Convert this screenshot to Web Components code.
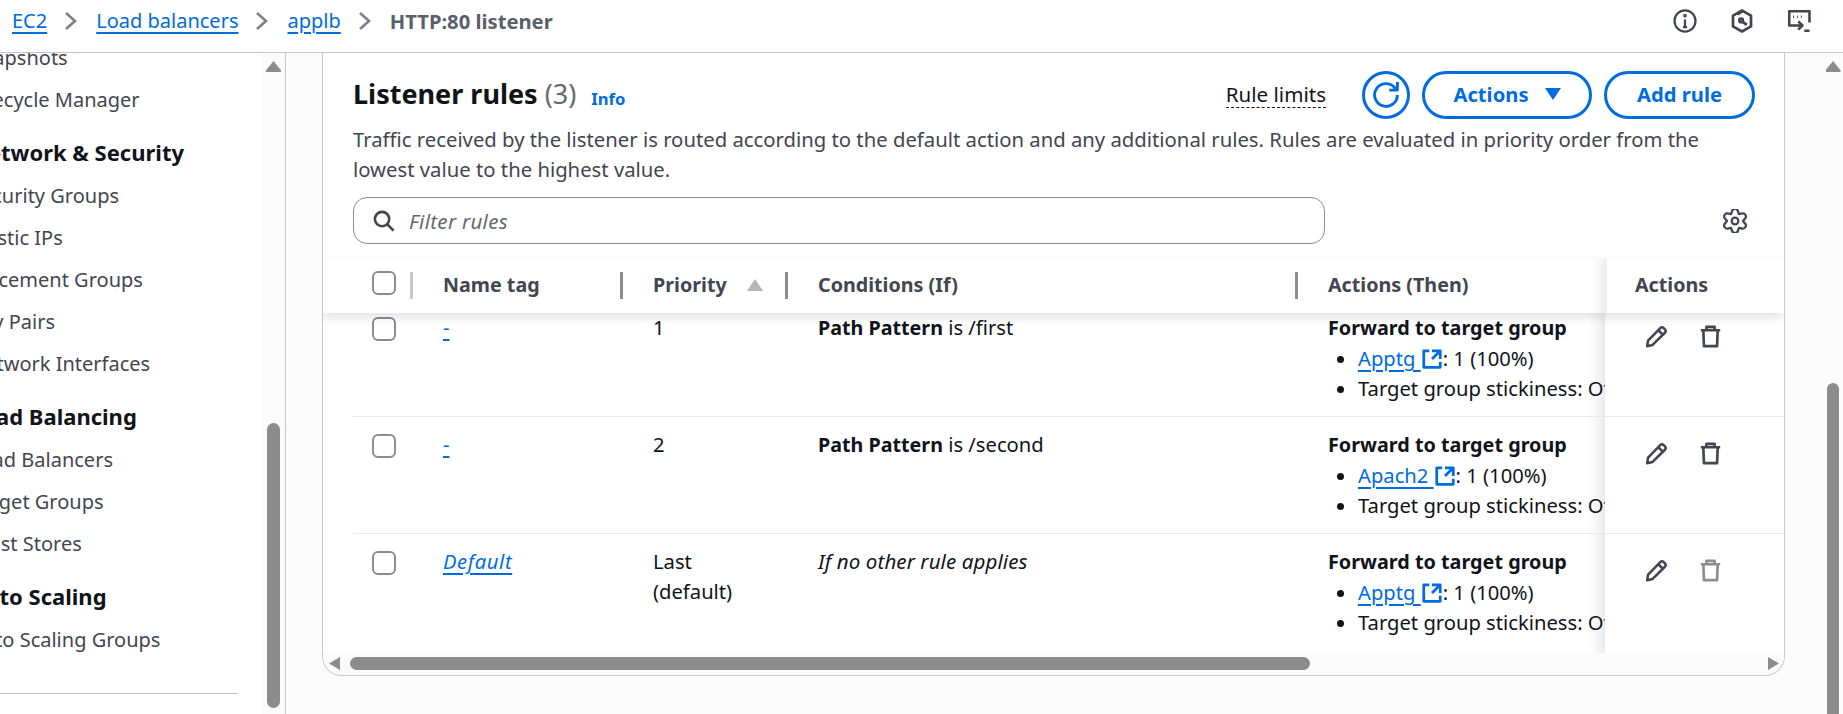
<!DOCTYPE html>
<html><head><meta charset="utf-8"><title>Listener rules</title>
<style>
html,body{margin:0;padding:0;height:714px;overflow:hidden;background:#fcfcfc}
body{font:20px/30px "Noto Sans",sans-serif;color:#0f141a}
</style></head><body>
<aws-shell>
  <aws-topbar slot="top">
    <aws-crumb href>EC2</aws-crumb><aws-crumb href>Load balancers</aws-crumb><aws-crumb href>applb</aws-crumb><aws-crumb>HTTP:80 listener</aws-crumb>
  </aws-topbar>
  <aws-sidenav slot="side">
    <nav-item>Snapshots</nav-item><nav-item>Lifecycle Manager</nav-item>
    <nav-item head>Network &amp; Security</nav-item><nav-item>Security Groups</nav-item><nav-item>Elastic IPs</nav-item><nav-item>Placement Groups</nav-item><nav-item>Key Pairs</nav-item><nav-item>Network Interfaces</nav-item>
    <nav-item head>Load Balancing</nav-item><nav-item>Load Balancers</nav-item><nav-item>Target Groups</nav-item><nav-item>Trust Stores</nav-item>
    <nav-item head>Auto Scaling</nav-item><nav-item>Auto Scaling Groups</nav-item>
  </aws-sidenav>
  <rules-card slot="main">
    <rule-row target="Apptg"><aws-link slot="name">-</aws-link><span slot="priority">1</span><span slot="cond"><b style="font-size:19.7px">Path Pattern</b> is /first</span></rule-row>
    <rule-row target="Apach2"><aws-link slot="name">-</aws-link><span slot="priority">2</span><span slot="cond"><b style="font-size:19.7px">Path Pattern</b> is /second</span></rule-row>
    <rule-row target="Apptg" disabled last><aws-link slot="name"><i style="letter-spacing:.6px">Default</i></aws-link><span slot="priority">Last<br>(default)</span><span slot="cond"><i style="font-size:20.5px;letter-spacing:.1px">If no other rule applies</i></span></rule-row>
  </rules-card>
</aws-shell>
<script>
const F='"Noto Sans",sans-serif';
function gear(){
  let d='';const c=8,ro=7.1,ri=5.3;
  for(let k=0;k<6;k++){
    const a=(k*60-90)*Math.PI/180,w=15*Math.PI/180,v=30*Math.PI/180;
    const p=(r,t)=>(c+r*Math.cos(t)).toFixed(2)+' '+(c+r*Math.sin(t)).toFixed(2);
    d+=(k?'L':'M')+p(ri,a-v)+'L'+p(ro,a-w)+'A2 2 0 0 1 '+p(ro,a+w)+'L'+p(ri,a+v);
  }
  return '<path d="'+d+'Z"/><circle cx="8" cy="8" r="2.2"/>';
}
const ICONS={
  refresh:'<path d="M10 5h5V0"/><path d="M15 8a7 7 0 1 1-1.1-3.77"/>',
  external:'<path d="M14 8V2H8M14 2 8 8M6 2H2v12h12v-4"/>',
  search:'<circle cx="7" cy="7" r="5"/><path d="m10.6 10.6 4.4 4.4"/>',
  settings:gear(),
  edit:'<path d="M2 14.2 2.6 10.6 10.4 2.6a1.6 1.6 0 0 1 2.2 0l.8.8a1.6 1.6 0 0 1 0 2.2L5.5 13.4Z"/><path d="m9.2 4 2.8 2.8"/>',
  trash:'<path d="M1.8 4h12.4M3.4 4l.4 10.2h8.4l.4-10.2M5.4 4V1.8h5.2V4"/>',
  info:'<circle cx="8" cy="8" r="7"/><path d="M8 7v5M6.6 12h2.8"/><circle cx="8" cy="4.4" r=".5"/>',
  shield:'<path d="M8 1 14 4.4v7.2L8 15l-6-3.4V4.4Z"/><circle cx="7.4" cy="7.6" r="1.2"/><path d="m8.2 8.4 3 2.2M8.4 1.4 5 3.6"/>',
  terminal:'<path d="M15 9V1.5H1.5V11H5"/><path d="M4 5.2h.6M6.6 5.2h.6M9.2 5.2h.6" stroke-width="1.6"/><path d="M4.5 11h5M7.5 8.2l2.8 2.8-2.8 2.8M11.5 14.5H15"/>'
};
function def(name,html){
  customElements.define(name,class extends HTMLElement{
    constructor(){super();this.attachShadow({mode:'open'});if(typeof html!=='function')this.shadowRoot.innerHTML=html;}
    connectedCallback(){
      if(typeof html==='function'&&!this._done){this._done=1;this.shadowRoot.innerHTML=html(this);}
    }
  });
}
def('aws-icon',el=>{
  const s=el.getAttribute('size')||24,w=el.getAttribute('stroke')||1.4;
  return `<style>:host{display:inline-flex;line-height:0;vertical-align:middle}</style>
  <svg width="${s}" height="${s}" viewBox="0 0 16 16" fill="none" stroke="currentColor" stroke-width="${w}" stroke-linejoin="round">${ICONS[el.getAttribute('name')]||''}</svg>`;
});
def('aws-shell',`<style>
:host{display:flex;flex-direction:column;width:1843px;height:714px;overflow:hidden}
.body{display:flex;flex:1;min-height:0}
.main{flex:1;min-width:0;display:flex;padding-left:36px}
.track{width:12px;margin:0 4px 0 0;display:flex;flex-direction:column;align-items:center}
.up{margin-top:8px;width:15px;height:11px;background:#8c8c8c;clip-path:polygon(50% 0,100% 85%,100% 100%,0 100%,0 85%)}
.thumb{margin-top:311px;width:12px;flex:1;margin-bottom:-20px;background:#8c8c8c;border-radius:6px 6px 0 0}
</style>
<slot name="top"></slot>
<div class="body"><slot name="side"></slot>
<div class="main"><slot name="main"></slot>
<div class="track"><div class="up"></div><div class="thumb"></div></div></div></div>`);
def('aws-topbar',`<style>
:host{display:flex;align-items:center;height:52px;box-sizing:content-box;border-bottom:1px solid #c6c6cd;background:#fff;padding-left:12px;font:20px/30px ${F};flex:none}
.icons{margin-left:auto;display:flex;gap:33px;padding-right:32px;color:#424650}
.crumbs{display:flex;align-items:center;margin-top:-10px}
</style><div class="crumbs"><slot></slot></div>
<div class="icons" style="margin-top:-10px"><aws-icon name="info" stroke="1.5"></aws-icon><aws-icon name="shield" stroke="1.8"></aws-icon><aws-icon name="terminal" stroke="1.7"></aws-icon></div>`);
def('aws-crumb',el=>{
  const link=el.hasAttribute('href');
  return `<style>:host{display:inline-flex;align-items:center}
  .l{color:#006ce0;text-decoration:underline;text-decoration-thickness:2px;text-underline-offset:4px}
  .c{color:#5a5f6a;font-weight:700;font-size:20.2px}
  svg{margin:0 18px 0 17px}</style>
  <span class="${link?'l':'c'}"><slot></slot></span>${link?'<svg width="14" height="20" viewBox="0 0 14 20" fill="none" stroke="#7d8089" stroke-width="2.6"><path d="m2 2 9 8-9 8"/></svg>':''}`;
});
def('aws-sidenav',`<style>
:host{display:flex;width:286px;box-sizing:border-box;border-right:1px solid #c6c6cd;background:#fff;flex:none;overflow:hidden}
.list{flex:none;width:262px;overflow:hidden}
.scroller{margin:-16px 0 0 -30px;width:268px}
.rule{height:1px;background:#c6c6cd;margin:32px 0 0 0}
.track{width:23px;background:#fbfbfb;display:flex;flex-direction:column;align-items:center}
.up{margin-top:8px;width:15px;height:11px;background:#8c8c8c;clip-path:polygon(50% 0,100% 85%,100% 100%,0 100%,0 85%)}
.thumb{margin-top:351px;width:13px;height:285px;background:#8c8c8c;border-radius:7px}
</style>
<div class="list"><div class="scroller"><slot></slot><div class="rule"></div></div></div>
<div class="track"><div class="up"></div><div class="thumb"></div></div>`);
def('nav-item',el=>{
  const h=el.hasAttribute('head');
  return `<style>:host{display:block;height:42px;white-space:nowrap;font:${h?700:400} ${h?'22px':'20px'}/${h?39:42}px ${F};color:${h?'#0f141a':'#424650'};${h?'margin-top:12px;':''}}</style><slot></slot>`;
});
def('aws-link',`<style>:host{color:#006ce0;text-decoration:underline;text-decoration-thickness:2px;text-underline-offset:4px}</style><slot></slot>`);
def('aws-button',`<style>:host{display:inline-flex;align-items:center;justify-content:center;box-sizing:border-box;height:48px;border:3px solid #006ce0;border-radius:24px;color:#006ce0;font:700 20.2px/24px ${F};background:#fff;flex:none;padding-bottom:2px}</style><slot></slot>`);
def('rules-card',`<style>
:host{display:flex;flex-direction:column;width:1463px;height:623px;box-sizing:border-box;border:1px solid #c6c6cd;border-top:0;border-radius:0 0 20px 20px;background:#fff;overflow:hidden;flex:none;margin-right:42px}
.pad{padding:18px 29px 0 30px}
.hdr{display:flex;align-items:center;height:48px}
h2{margin:0 0 2px;font:700 27px/30px ${F};color:#0f141a}
h2 span{font-weight:400;color:#656871}
.info{margin-left:15px;font:700 16.6px/20px ${F};color:#006ce0;padding-top:8px}
.lim{margin:0 36px 2px auto;font:20.6px/26px ${F};border-bottom:1.5px dashed #0f141a}
.btns{display:flex;gap:12px}
p{margin:5px 0 0;font:20.3px/30px ${F};color:#424650;width:1400px}
.fbar{display:flex;align-items:center;margin-top:13px;height:47px}
.filter{box-sizing:border-box;width:972px;height:47px;border:1px solid #8c8c94;border-radius:14px;display:flex;align-items:center;padding-left:18px;gap:14px;color:#424650;font:italic 20.5px/30px ${F}}
.filter span{color:#656871;letter-spacing:.3px}
.gear{margin-left:auto;margin-right:8px;color:#424650}
.thead{position:relative;z-index:2;margin-top:15px;height:54px;box-sizing:border-box;background:#fff;padding-left:30px;box-shadow:0 4px 10px rgba(0,0,0,.12);display:grid;grid-template-columns:60px 210px 165px 510px 309px 1fr;font:700 19.7px/30px ${F};color:#424650}
.th{display:flex;align-items:flex-start;padding:11px 0 0 30px;position:relative}
.th.k{padding:12px 0 0 19px}
.sep{position:absolute;right:0;top:13px;width:3px;height:27px;background:#8c8c94}
.sep.l{background:#c6c6cd}
.sticky{background:#fff;padding-left:28px;position:relative}
.sticky::before{content:"";position:absolute;left:-16px;top:0;bottom:0;width:16px;background:linear-gradient(90deg,transparent,rgba(0,0,0,.07))}
.box{box-sizing:border-box;width:24px;height:24px;border:2px solid #8c8c94;border-radius:6px}
.stri{margin:9px 0 0 20px;width:0;height:0;border:8px solid transparent;border-bottom:12px solid #b4b4bb;border-top:0}
.rows{flex:1;min-height:0;overflow:hidden;padding-left:30px}
.inner{margin-top:-13px}
.hs{height:22px;flex:none;background:#fbfbfb;display:flex;align-items:center;padding:0 5px 1px 6px;box-sizing:border-box}
.al{width:11px;height:13px;background:#8c8c8c;clip-path:polygon(100% 0,100% 100%,0 50%)}
.ar{width:11px;height:13px;background:#8c8c8c;clip-path:polygon(0 0,100% 50%,0 100%);margin-left:auto}
.ht{width:960px;height:13px;border-radius:7px;background:#8c8c8c;margin-left:10px}
</style>
<div class="pad">
<div class="hdr"><h2>Listener rules <span>(3)</span></h2><span class="info">Info</span><span class="lim">Rule limits</span>
<div class="btns"><aws-button style="width:48px;padding:0"><aws-icon name="refresh" size="26" stroke="1.8"></aws-icon></aws-button>
<aws-button style="width:170px"><span>Actions</span><span style="width:0;height:0;border:8px solid transparent;border-top:12px solid #006ce0;border-bottom:0;margin-left:16px"></span></aws-button>
<aws-button style="width:151px">Add rule</aws-button></div></div>
<p>Traffic received by the listener is routed according to the default action and any additional rules. Rules are evaluated in priority order from the lowest value to the highest value.</p>
<div class="fbar"><div class="filter"><aws-icon name="search" size="23" stroke="1.8"></aws-icon><span>Filter rules</span></div><aws-icon class="gear" name="settings" size="24" stroke="1.5"></aws-icon></div>
</div>
<div class="thead">
<div class="th k"><div class="box"></div><div class="sep l"></div></div>
<div class="th">Name tag<div class="sep"></div></div>
<div class="th">Priority<div class="stri"></div><div class="sep"></div></div>
<div class="th">Conditions (If)<div class="sep"></div></div>
<div class="th">Actions (Then)</div>
<div class="th sticky">Actions</div>
</div>
<div class="rows"><div class="inner"><slot></slot></div></div>
<div class="hs"><div class="al"></div><div class="ht"></div><div class="ar"></div></div>`);
def('rule-row',el=>{
  const dis=el.hasAttribute('disabled'),last=el.hasAttribute('last');
  return `<style>
:host{display:grid;grid-template-columns:58px 210px 165px 510px 309px 1fr;height:${last?120:117}px;font:20.2px/30px ${F};color:#0f141a}
.c{padding:12px 0 0 32px;box-sizing:border-box;${last?'':'border-bottom:1.5px solid #e8e8ec;'}min-width:0}
.c.k{padding:17px 0 0 19px}
.box{box-sizing:border-box;width:24px;height:24px;border:2px solid #8c8c94;border-radius:6px}
.then{overflow:hidden;white-space:nowrap}
ul{margin:0;padding:0 0 0 30px}
b{font-weight:700;font-size:19.8px}
.a{color:#006ce0;text-decoration:underline;text-decoration-thickness:2px;text-underline-offset:4px}
.e{color:#006ce0;vertical-align:-4px;margin:-4px 0}
.s{position:relative;background:#fff;display:flex;gap:29px;padding:24px 0 0 39px;color:#424650}
.s::before{content:"";position:absolute;left:-16px;top:0;bottom:0;width:16px;background:linear-gradient(90deg,transparent,rgba(0,0,0,.08))}
.d{color:#8c8c94}
</style>
<div class="c k"><div class="box"></div></div>
<div class="c"><slot name="name"></slot></div>
<div class="c"><slot name="priority"></slot></div>
<div class="c"><slot name="cond"></slot></div>
<div class="c then"><b>Forward to target group</b>
<ul><li><span class="a">${el.getAttribute('target')}&nbsp;</span><aws-icon class="e" name="external" size="22" stroke="2"></aws-icon>: 1 (100%)</li><li>Target group stickiness: Off</li></ul></div>
<div class="c s"><aws-icon name="edit" size="25" stroke="1.6"></aws-icon><aws-icon class="${dis?'d':''}" name="trash" size="25" stroke="1.7"></aws-icon></div>`;
});
</script>
</body></html>
